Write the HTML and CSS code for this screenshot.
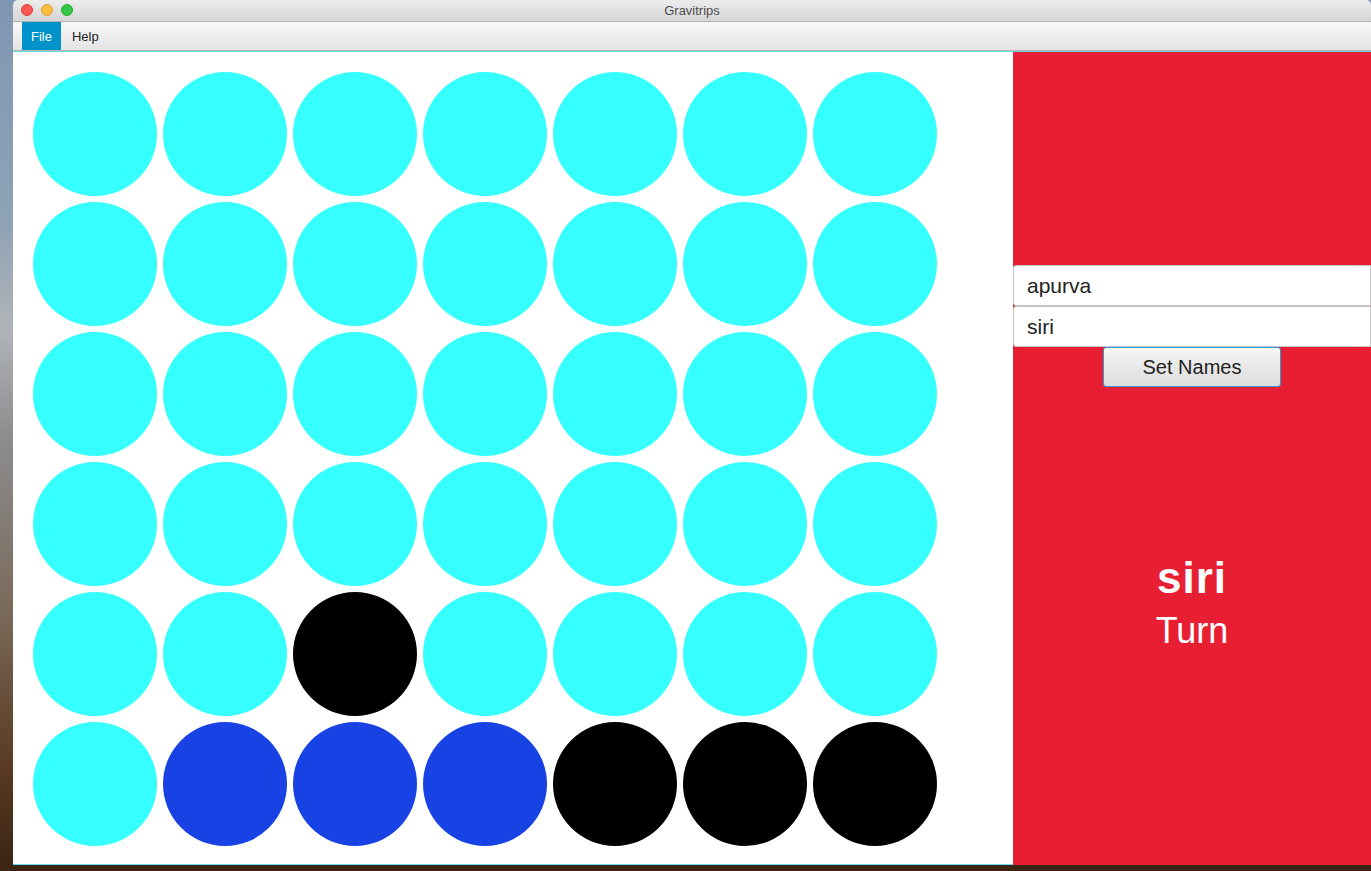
FILE: index.html
```html
<!DOCTYPE html>
<html>
<head>
<meta charset="utf-8">
<link rel="stylesheet" href="styles.css">
</head>
<body>
<div class="desktop">
  <div class="window">
    <div class="titlebar">
      <div class="lights">
        <span class="light red"></span>
        <span class="light yellow"></span>
        <span class="light green"></span>
      </div>
      <div class="title">Gravitrips</div>
    </div>
    <div class="menubar">
      <div class="menu active">File</div>
      <div class="menu">Help</div>
    </div>
    <div class="content">
      <div class="board">
        <div class="grid">
          <div class="disc c"></div><div class="disc c"></div><div class="disc c"></div><div class="disc c"></div><div class="disc c"></div><div class="disc c"></div><div class="disc c"></div>
          <div class="disc c"></div><div class="disc c"></div><div class="disc c"></div><div class="disc c"></div><div class="disc c"></div><div class="disc c"></div><div class="disc c"></div>
          <div class="disc c"></div><div class="disc c"></div><div class="disc c"></div><div class="disc c"></div><div class="disc c"></div><div class="disc c"></div><div class="disc c"></div>
          <div class="disc c"></div><div class="disc c"></div><div class="disc c"></div><div class="disc c"></div><div class="disc c"></div><div class="disc c"></div><div class="disc c"></div>
          <div class="disc c"></div><div class="disc c"></div><div class="disc k"></div><div class="disc c"></div><div class="disc c"></div><div class="disc c"></div><div class="disc c"></div>
          <div class="disc c"></div><div class="disc b"></div><div class="disc b"></div><div class="disc b"></div><div class="disc k"></div><div class="disc k"></div><div class="disc k"></div>
        </div>
      </div>
      <div class="side">
        <div class="inputs">
          <div class="field">apurva</div>
          <div class="field">siri</div>
          <div class="btn">Set Names</div>
        </div>
        <div class="turn">
          <div class="player">siri</div>
          <div class="turnlabel">Turn</div>
        </div>
      </div>
    </div>
  </div>
</div>
</body>
</html>
```

FILE: styles.css
```css
html, body {
  margin: 0;
  padding: 0;
  width: 1371px;
  height: 871px;
  overflow: hidden;
}
.desktop {
  width: 1371px;
  height: 871px;
  background: linear-gradient(180deg, #7f97b4 0%, #8ea2b6 25%, #b0b4b8 38%, #8d8d8f 50%, #7a6a5a 70%, #5a3a22 88%, #3a2414 100%);
  display: flex;
  flex-direction: column;
  padding-left: 13px;
  box-sizing: border-box;
}
.window {
  width: 1358px;
  display: flex;
  flex-direction: column;
  font-family: "Liberation Sans", Arial, sans-serif;
}
.titlebar {
  height: 21px;
  background: linear-gradient(180deg, #ececec, #d6d6d6);
  border-bottom: 1px solid #b4b4b4;
  position: relative;
  display: flex;
  align-items: center;
  justify-content: center;
  border-radius: 5px 5px 0 0;
}
.lights {
  position: absolute;
  left: 8px;
  top: 4px;
  display: flex;
  gap: 8px;
}
.light {
  width: 12px;
  height: 12px;
  border-radius: 50%;
  box-sizing: border-box;
}
.light.red { background: #fc5753; border: 1px solid #df3d38; }
.light.yellow { background: #fdbc40; border: 1px solid #de9f34; }
.light.green { background: #33c748; border: 1px solid #27aa35; }
.title {
  font-size: 13px;
  color: #4d4d4d;
}
.menubar {
  height: 28px;
  background: linear-gradient(180deg, #f8f8f8, #e4e4e4);
  border-bottom: 1px solid #b8b8b8;
  display: flex;
  padding-left: 9px;
}
.menu {
  font-size: 13px;
  color: #222;
  padding: 0 11px;
  display: flex;
  align-items: center;
}
.menu.active {
  background: #0093c9;
  color: #fff;
  padding: 0 9px;
}
.content {
  display: flex;
  height: 814px;
  border-top: 1px solid #5fd8e0;
}
.board {
  width: 1000px;
  background: #fff;
  border-bottom: 1px solid #5fe0ea;
  box-sizing: border-box;
  padding: 20px 0 0 20px;
  height: 813px;
}
.grid {
  display: grid;
  grid-template-columns: repeat(7, 124px);
  grid-auto-rows: 124px;
  gap: 6px;
}
.disc {
  border-radius: 50%;
}
.disc.c { background: #36ffff; }
.disc.b { background: #1842e4; }
.disc.k { background: #000; }
.side {
  flex: 1;
  background: #e81e33;
  display: flex;
  flex-direction: column;
  height: 813px;
}
.inputs {
  margin-top: 213px;
  display: flex;
  flex-direction: column;
  align-items: center;
}
.field {
  align-self: stretch;
  height: 41px;
  box-sizing: border-box;
  background: #fff;
  border: 1px solid #c4c4c4;
  border-radius: 3px 0 0 3px;
  padding-left: 13px;
  font-family: "Liberation Sans", Arial, sans-serif;
  font-size: 21px;
  color: #222;
  display: flex;
  align-items: center;
}
.btn {
  width: 178px;
  height: 40px;
  box-sizing: border-box;
  border: 1px solid #2b9fd8;
  border-radius: 3px;
  background: linear-gradient(180deg, #f6f6f6, #dcdcdc);
  font-family: "Liberation Sans", Arial, sans-serif;
  font-size: 20px;
  color: #222;
  display: flex;
  align-items: center;
  justify-content: center;
}
.turn {
  margin-top: 168px;
  display: flex;
  flex-direction: column;
  align-items: center;
  color: #fff;
}
.player {
  font-family: "Liberation Sans", Arial, sans-serif;
  font-weight: bold;
  font-size: 44px;
  letter-spacing: 1px;
  line-height: 46px;
}
.turnlabel {
  font-family: "Liberation Sans", Arial, sans-serif;
  font-size: 36px;
  line-height: 44px;
  margin-top: 8px;
}
```
